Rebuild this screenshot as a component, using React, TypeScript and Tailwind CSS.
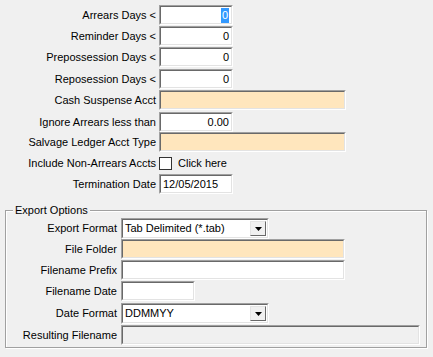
import React from "react";

function Box({
  width,
  bg = "bg-white",
  children,
  align = "left",
}: {
  width: string;
  bg?: string;
  children?: React.ReactNode;
  align?: "left" | "right";
}) {
  return (
    <div
      className={`${width} h-[20px] border border-t-[#a0a0a0] border-l-[#a0a0a0] border-b-white border-r-white`}
    >
      <div
        className={`h-full w-full border border-t-[#696969] border-l-[#696969] border-b-[#e3e3e3] border-r-[#e3e3e3] ${bg} flex items-center px-[1px] ${
          align === "right" ? "justify-end" : "justify-start"
        }`}
      >
        {children}
      </div>
    </div>
  );
}

function Combo({ value }: { value: string }) {
  return (
    <div className="w-[148px] h-[21px] border border-t-[#a0a0a0] border-l-[#a0a0a0] border-b-white border-r-white">
      <div className="h-full w-full border border-t-[#696969] border-l-[#696969] border-b-[#e3e3e3] border-r-[#e3e3e3] bg-white flex items-center pl-[2px] pr-[1px]">
        <span className="flex-1">{value}</span>
        <div className="w-[16px] h-[15px] bg-[#f0f0f0] border border-t-[#e3e3e3] border-l-[#e3e3e3] border-b-[#696969] border-r-[#696969] flex items-center justify-center">
          <svg width="7" height="4" viewBox="0 0 7 4">
            <path d="M0 0h7L3.5 4z" fill="#000" />
          </svg>
        </div>
      </div>
    </div>
  );
}

function Row({
  label,
  mt,
  labelW = "w-[156px]",
  gap = "ml-[3px]",
  children,
}: {
  label: string;
  mt: string;
  labelW?: string;
  gap?: string;
  children: React.ReactNode;
}) {
  return (
    <div className={`flex items-center ${mt}`}>
      <div className={`${labelW} text-right whitespace-nowrap`}>{label}</div>
      <div className={gap}>{children}</div>
    </div>
  );
}

export default function App() {
  return (
    <div
      className="w-[433px] h-[357px] bg-[#f0f0f0] text-[11px] text-black overflow-hidden"
      style={{ fontFamily: '"Liberation Sans", Arial, sans-serif' }}
    >
      <div className="pt-[5px]">
        <Row label="Arrears Days <" mt="mt-0">
          <Box width="w-[74px]" align="right">
            <span className="bg-[#3399ff] text-white px-[1px] leading-[15px] mr-[1px]">0</span>
          </Box>
        </Row>
        <Row label="Reminder Days <" mt="mt-[1px]">
          <Box width="w-[74px]" align="right">
            <span className="mr-[1px]">0</span>
          </Box>
        </Row>
        <Row label="Prepossession Days <" mt="mt-[1px]">
          <Box width="w-[74px]" align="right">
            <span className="mr-[1px]">0</span>
          </Box>
        </Row>
        <Row label="Reposession Days <" mt="mt-[2px]">
          <Box width="w-[74px]" align="right">
            <span className="mr-[1px]">0</span>
          </Box>
        </Row>
        <Row label="Cash Suspense Acct" mt="mt-[1px]">
          <Box width="w-[187px]" bg="bg-[#ffe6bd]" />
        </Row>
        <Row label="Ignore Arrears less than" mt="mt-[2px]">
          <Box width="w-[74px]" align="right">
            <span className="mr-[1px]">0.00</span>
          </Box>
        </Row>
        <Row label="Salvage Ledger Acct Type" mt="mt-0">
          <Box width="w-[187px]" bg="bg-[#ffe6bd]" />
        </Row>
        <Row label="Include Non-Arrears Accts" mt="mt-[1px]">
          <div className="flex items-center h-[20px]">
            <div className="w-[13px] h-[13px] bg-white border border-[#333]" />
            <span className="ml-[6px]">Click here</span>
          </div>
        </Row>
        <Row label="Termination Date" mt="mt-[1px]">
          <Box width="w-[74px]">
            <span className="ml-[1px]">12/05/2015</span>
          </Box>
        </Row>
      </div>

      <div className="relative ml-[5px] mt-[16px] w-[422px] h-[138px] border border-[#a0a0a0] shadow-[inset_1px_1px_0_#fff,1px_1px_0_#fff]">
        <div className="absolute -top-[8px] left-[7px] px-[2px] bg-[#f0f0f0] leading-[14px]">
          Export Options
        </div>
        <div className="pt-[7px]">
          <Row label="Export Format" mt="mt-0" labelW="w-[111px]" gap="ml-[4px]">
            <Combo value="Tab Delimited (*.tab)" />
          </Row>
          <Row label="File Folder" mt="mt-0" labelW="w-[111px]" gap="ml-[4px]">
            <Box width="w-[224px]" bg="bg-[#ffe6bd]" />
          </Row>
          <Row label="Filename Prefix" mt="mt-[1px]" labelW="w-[111px]" gap="ml-[4px]">
            <Box width="w-[224px]" />
          </Row>
          <Row label="Filename Date" mt="mt-[1px]" labelW="w-[111px]" gap="ml-[4px]">
            <Box width="w-[74px]" />
          </Row>
          <Row label="Date Format" mt="mt-[2px]" labelW="w-[111px]" gap="ml-[4px]">
            <Combo value="DDMMYY" />
          </Row>
          <Row label="Resulting Filename" mt="mt-[1px]" labelW="w-[111px]" gap="ml-[4px]">
            <Box width="w-[299px]" bg="bg-[#f0f0f0]" />
          </Row>
        </div>
      </div>
    </div>
  );
}
